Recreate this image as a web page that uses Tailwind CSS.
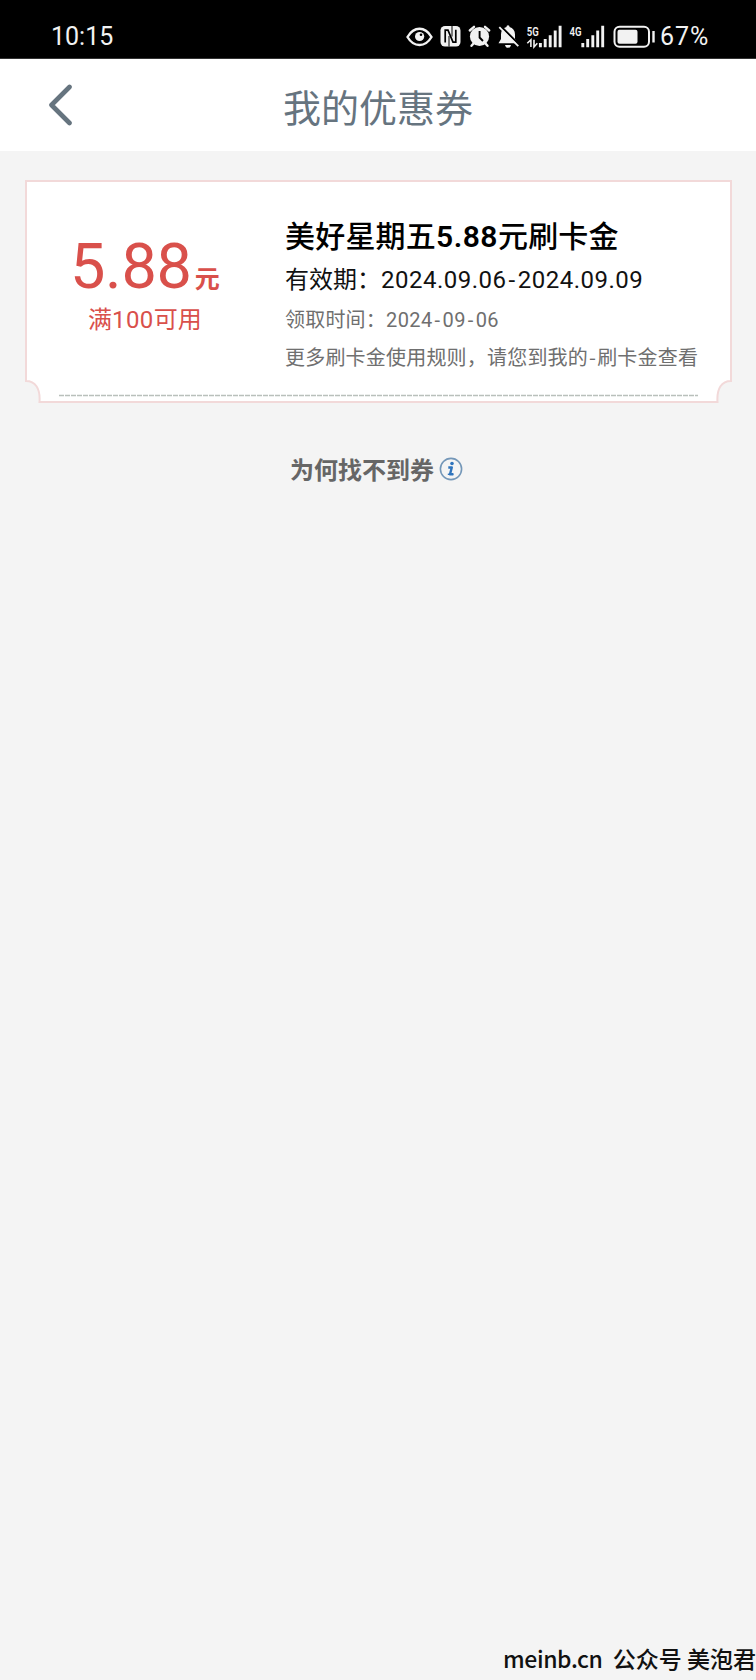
<!DOCTYPE html>
<html lang="zh-CN">
<head>
<meta charset="UTF-8">
<meta name="viewport" content="width=device-width, initial-scale=1.0">
<title>我的优惠券</title>
<script src="https://cdn.jsdelivr.net/npm/@tailwindcss/browser@4"></script>
</head>
<body class="flex flex-col h-[1680px] overflow-hidden bg-[#f4f4f4] font-['Noto_Sans_CJK_SC',sans-serif]">

<!-- Status bar -->
<div class="flex items-start h-[59px] shrink-0 bg-black border-b border-[#333] text-[#f2f2f2] font-['Roboto','Noto_Sans_CJK_SC',sans-serif]">
  <span class="w-[400px] pl-[51px] mt-[22px] text-[25px] leading-[30px]">10:15</span>
  <svg class="shrink-0" width="260" height="58" viewBox="400 0 260 58" fill="none" stroke="#f2f2f2">
    <!-- eye -->
    <path d="M407.5 37C411 31 415 28.800 419.500 28.800S428 31 431.500 37C428 43 424 45 419.500 45S411 43 407.500 37Z" stroke-width="2.400"/>
    <circle cx="419.600" cy="36.500" r="4.600" fill="#f2f2f2" stroke="none"/>
    <circle cx="421" cy="34.800" r="1.300" fill="#000" stroke="none"/>
    <!-- nfc -->
    <rect x="440.500" y="26" width="20" height="20.500" rx="4.500" fill="#f2f2f2" stroke="none"/>
    <path d="M445.200 42.500V30.200H448L453 42.200H455.800V29.800" stroke="#000" stroke-width="1.700"/>
    <path d="M449 36V46.500M452 26V36.500" stroke="#000" stroke-width="1"/>
    <!-- alarm -->
    <circle cx="479.500" cy="36.500" r="9.600" fill="#f2f2f2" stroke="none"/>
    <path d="M469.800 30.500L474 26.800M489.200 30.500L485 26.800" stroke-width="2.400" stroke-linecap="round"/>
    <path d="M473.500 43.500L471.500 45.800M485.500 43.500L487.500 45.800" stroke-width="2.400" stroke-linecap="round"/>
    <path d="M479.600 31V37.500L483 41" stroke="#000" stroke-width="1.900"/>
    <!-- muted bell -->
    <path d="M508 25.300C509 25.300 509.500 26 509.500 27C513 28 515 30.500 515 34.500V39L517.500 43.300H498.500L501 39V34.500C501 30.500 503 28 506.500 27C506.500 26 507 25.300 508 25.300Z" fill="#f2f2f2" stroke="none"/>
    <path d="M505 45H511C510.500 47 509.500 47.800 508 47.800S505.500 47 505 45Z" fill="#f2f2f2" stroke="none"/>
    <path d="M501 26.500L520 45.500" stroke="#000" stroke-width="2"/>
    <path d="M499.300 27.200L518.300 46.200" stroke-width="1.800"/>
    <!-- 5G signal -->
    <text x="526.700" y="35.500" font-weight="600" font-size="13.500" textLength="12" lengthAdjust="spacingAndGlyphs" fill="#f2f2f2" stroke="none">5G</text>
    <path d="M530.900 47V39.800L527.300 43.300M534 39.800V47L537.300 43.300" stroke-width="1.600"/>
    <path d="M540.400 43V47.300M545.200 39V47.300M550.200 35.300V47.300M555.200 30.500V47.300M560.100 25.700V47.300" stroke-width="2.900"/>
    <!-- 4G signal -->
    <text x="569.500" y="35.500" font-weight="600" font-size="13.500" textLength="12" lengthAdjust="spacingAndGlyphs" fill="#f2f2f2" stroke="none">4G</text>
    <path d="M582.800 43V47.300M587.700 39V47.300M592.800 35.300V47.300M597.700 30.500V47.300M602.700 25.700V47.300" stroke-width="2.900"/>
    <!-- battery -->
    <rect x="614.500" y="26.700" width="34.500" height="20" rx="5" stroke-width="2"/>
    <rect x="617.500" y="29.800" width="20" height="13.900" rx="2" fill="#f2f2f2" stroke="none"/>
    <path d="M653.500 31V42.500" stroke-width="2.400"/>
  </svg>
  <span class="mt-[22px] text-[25px] leading-[30px] tracking-[1px]">67%</span>
</div>

<!-- Header -->
<header class="flex items-center h-[92px] shrink-0 bg-white text-[#66747f]">
  <svg class="ml-[48px]" width="26" height="42" viewBox="0 0 26 42" fill="none" stroke="#66747f" stroke-width="4.600" stroke-linecap="round" stroke-linejoin="round"><path d="M21.500 3L3.500 21L21.500 39"/></svg>
  <h1 class="ml-[209px] text-[38px] leading-[46px] pt-px">我的优惠券</h1>
</header>

<!-- Coupon -->
<main class="flex flex-col px-[25px] pt-[29px]">
  <section class="relative h-[224px] flex">
    <svg class="absolute inset-0" width="707" height="224" viewBox="0 0 707 224" fill="#fff" stroke="#f2d9d9" stroke-width="2">
      <path d="M1 1H706V201C697 201 691.500 208 692.500 222H14.500C15.500 208 10 201 1 201Z"/>
      <path d="M34 215.500H673" stroke="#b9c0bb" stroke-width="1.500" stroke-dasharray="5 1"/>
    </svg>
    <div class="relative w-[260px] shrink-0 pt-[54px] text-[#d9504b]">
      <div class="flex items-baseline h-[66px] pl-[45px]">
        <span class="text-[63px] leading-[66px] tracking-[-0.3px] font-['Roboto',sans-serif]">5.88</span>
        <span class="ml-[3px] text-[25px] leading-[30px] font-bold">元</span>
      </div>
      <p class="pl-[63px] pt-[2px] text-[24px] leading-[32px]">满<span class="tracking-[0.4px] leading-none font-['Roboto',sans-serif]">100</span>可用</p>
    </div>
    <div class="relative whitespace-nowrap text-[#6f6f6f]">
      <h2 class="mt-[34px] h-[40px] text-[30px] leading-[40px] tracking-[0.2px] font-medium text-black">美好星期五<span class="tracking-[0.5px] leading-none font-['Roboto',sans-serif] font-semibold">5.88</span>元刷卡金</h2>
      <p class="mt-[6px] h-[36px] text-[24px] leading-[36px] text-[#111]">有效期：<span class="tracking-[0.5px] leading-none font-['Roboto',sans-serif]">2024.09.06<span class="px-[2px]">-</span>2024.09.09</span></p>
      <p class="mt-[8px] h-[30px] text-[20px] leading-[30px] tracking-[0.2px]">领取时间：<span class="tracking-[0.4px] leading-none font-['Roboto',sans-serif]">2024<span class="px-[2px]">-</span>09<span class="px-[2px]">-</span>06</span></p>
      <p class="mt-[8px] h-[30px] text-[20px] leading-[30px] tracking-[0.2px]">更多刷卡金使用规则，请您到我的<span class="px-px">-</span>刷卡金查看</p>
    </div>
  </section>
  <div class="flex items-center h-[86px] pt-[48px] pl-[265px] pb-[4px] text-[24px] font-bold text-[#666]">
    <span class="leading-[36px]">为何找不到券</span>
    <svg class="ml-[5px]" width="24" height="24" viewBox="0 0 24 24" fill="none">
      <circle cx="12" cy="12" r="10.600" stroke="#7497b8" stroke-width="1.600"/>
      <circle cx="13" cy="6.500" r="1.800" fill="#2f74bd"/>
      <path d="M9.300 10.500H12.800L11 17.300H14.300" stroke="#2f74bd" stroke-width="2.400" stroke-linejoin="round"/>
      <path d="M8.800 17.300H14.500" stroke="#2f74bd" stroke-width="1.400"/>
    </svg>
  </div>
</main>

<footer class="mt-auto flex pl-[503px] pb-[5px] whitespace-nowrap text-[23px] leading-[34px] font-medium text-[#111]">
  <span class="w-[112px] tracking-[-0.4px]">meinb.cn</span>
  <span>公众号 美泡君</span>
</footer>
</body>
</html>
